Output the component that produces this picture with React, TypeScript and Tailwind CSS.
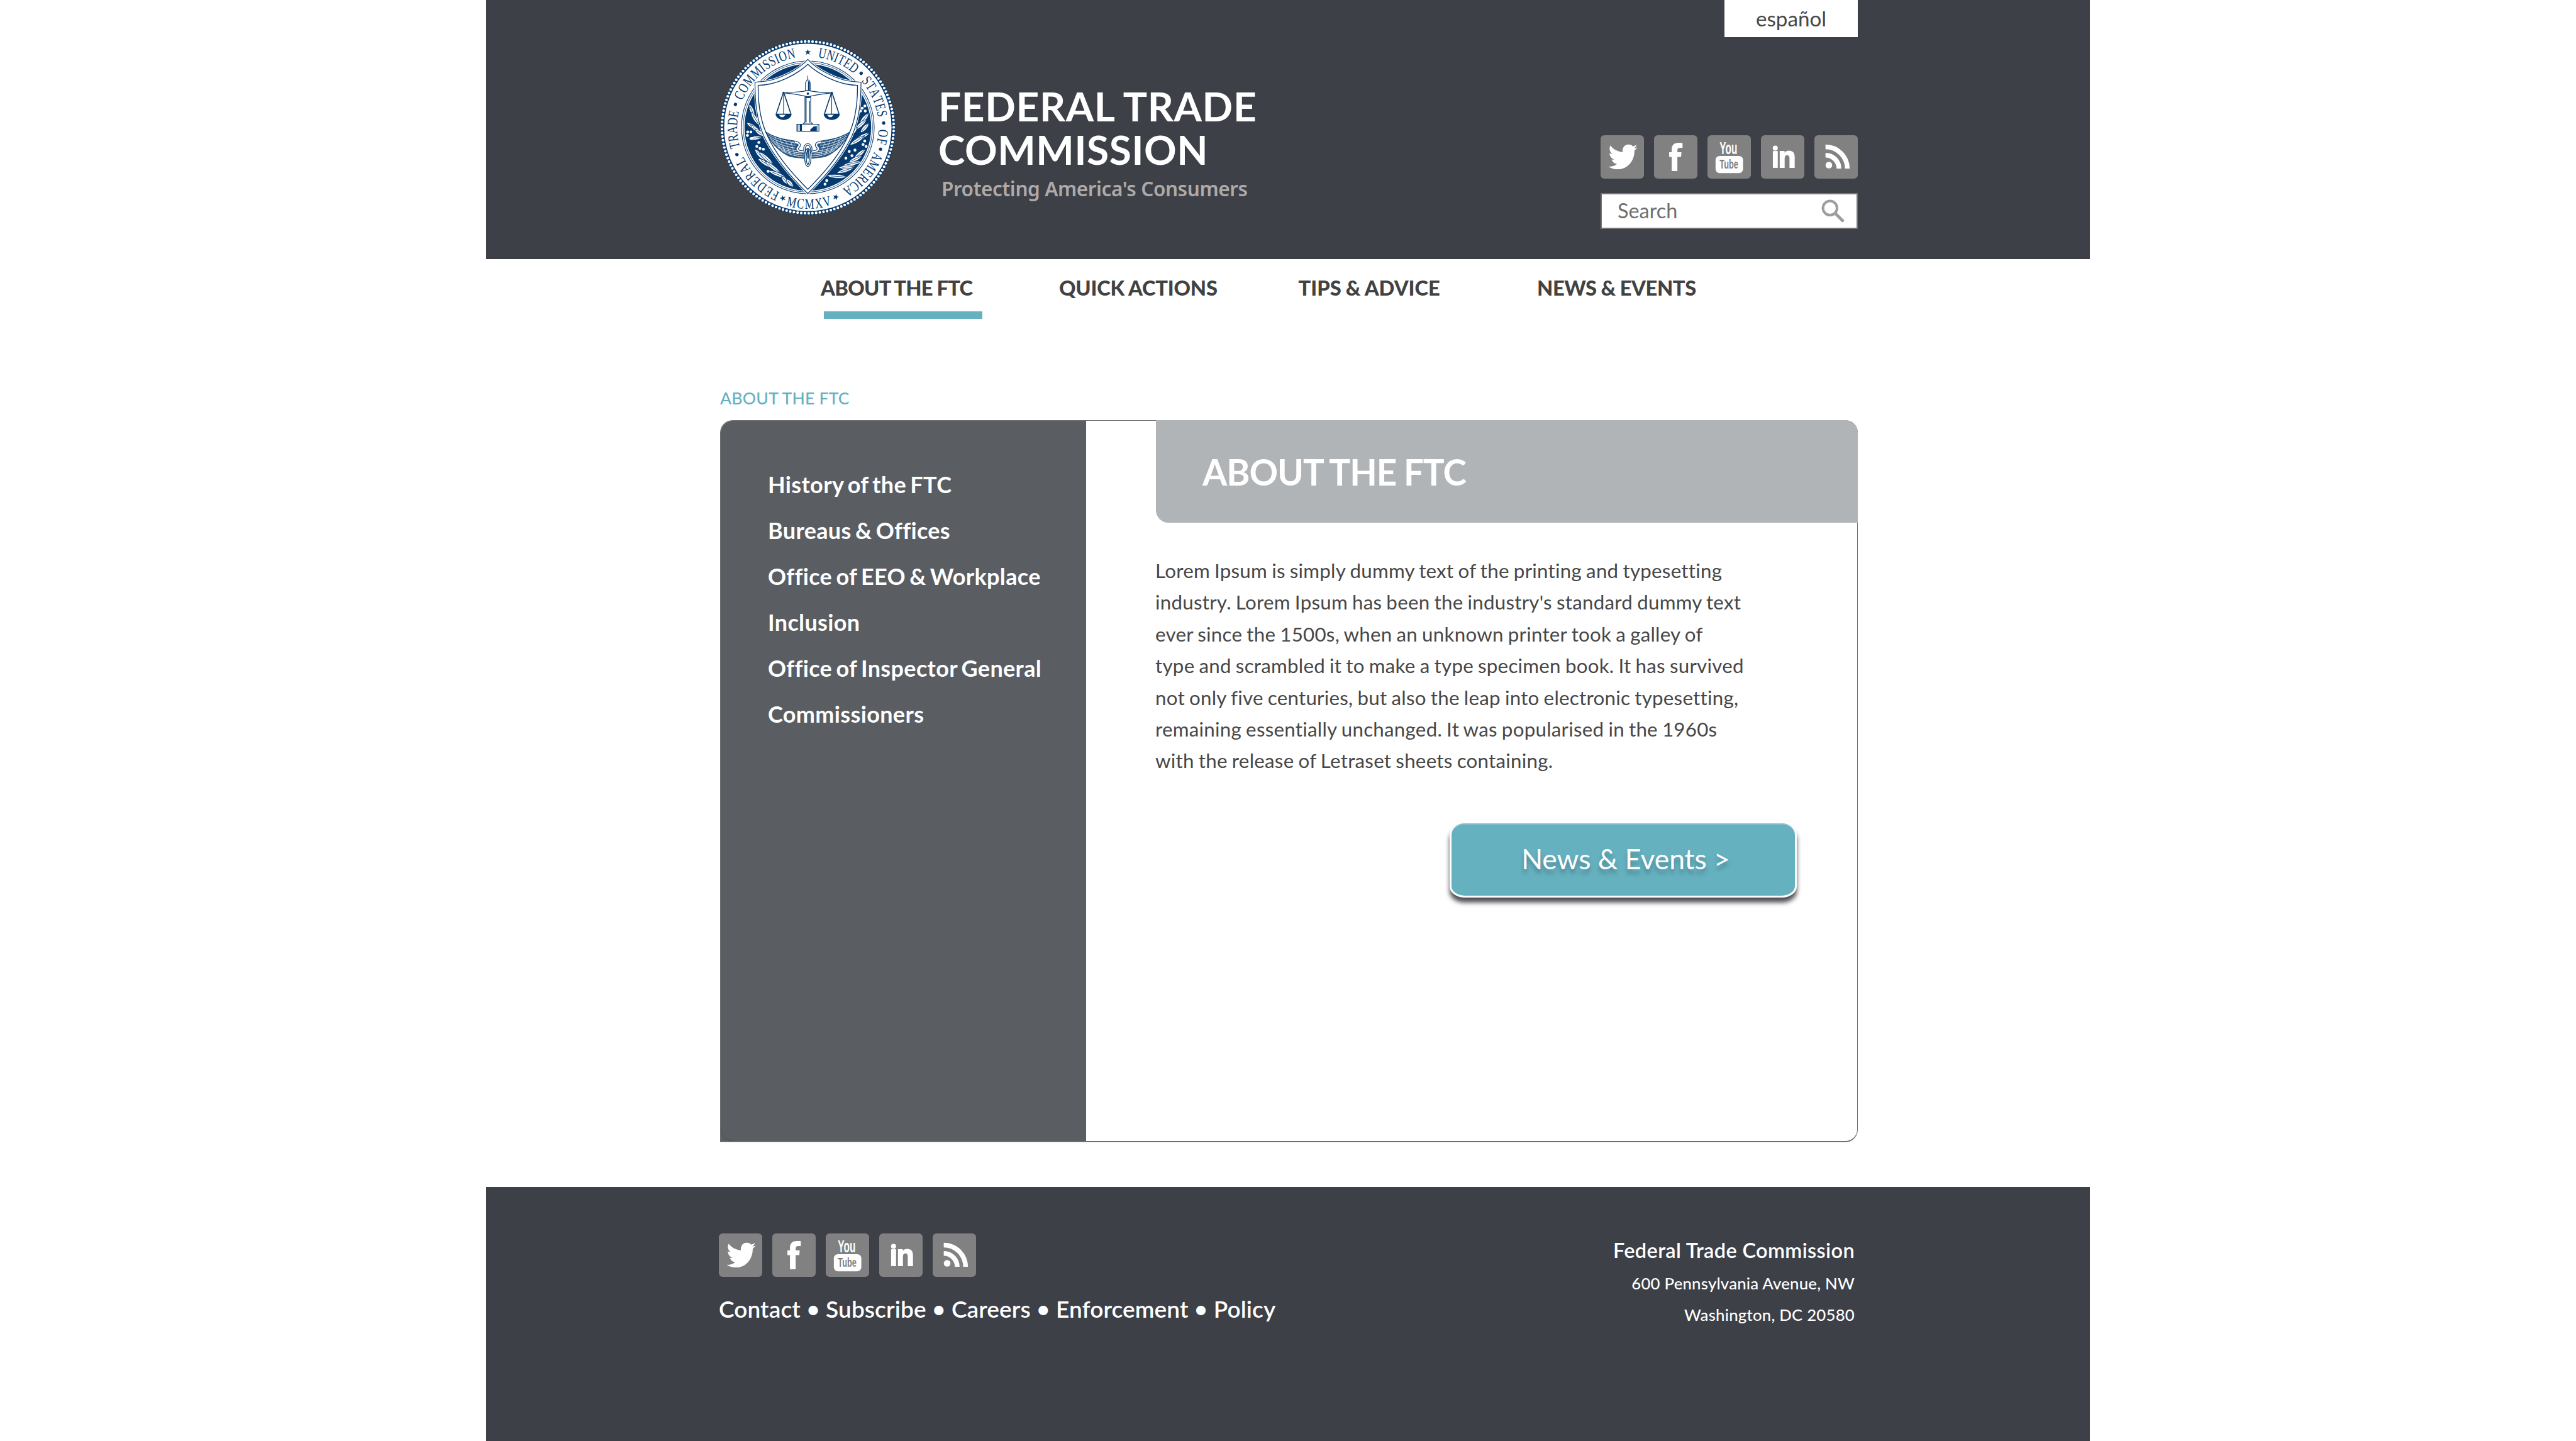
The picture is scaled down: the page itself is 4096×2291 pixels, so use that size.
import React from "react";
import { FaTwitter } from "react-icons/fa";

const BLUE = "#053a70";

const WIDTHS: Record<string, number> = {
  A: 722, C: 667, D: 722, E: 611, F: 556, I: 333, L: 611, M: 889, N: 722,
  O: 722, R: 667, S: 556, T: 611, U: 722, V: 722, X: 722,
};

type RingWord = { text: string; from: number; to: number; flip?: boolean };

const RING_WORDS: RingWord[] = [
  { text: "UNITED", from: 8, to: 41 },
  { text: "STATES", from: 49, to: 82 },
  { text: "OF", from: 91, to: 103.5 },
  { text: "AMERICA", from: 110, to: 151 },
  { text: "MCMXV", from: 196, to: 162.5, flip: true },
  { text: "FEDERAL", from: 203, to: 246 },
  { text: "TRADE", from: 253.5, to: 283 },
  { text: "COMMISSION", from: 292, to: 350.5 },
];

function RingText({ text, from, to, flip }: RingWord) {
  const total = [...text].reduce((s, c) => s + WIDTHS[c], 0);
  const span = to - from;
  let acc = 0;
  return (
    <>
      {[...text].map((c, i) => {
        const mid = from + (span * (acc + WIDTHS[c] / 2)) / total;
        acc += WIDTHS[c];
        const angle = flip ? mid - 180 : mid;
        return (
          <text
            key={i}
            textAnchor="middle"
            fontSize="86"
            fontFamily="Liberation Serif, serif"
            fill={BLUE}
            transform={`rotate(${angle}) translate(0 ${flip ? 483 : -420}) scale(0.74 1)`}
          >
            {c}
          </text>
        );
      })}
    </>
  );
}

const STAR = "M0 -19 L4.6 -6 L18 -6 L7.2 2.4 L11.2 15.4 L0 7.6 L-11.2 15.4 L-7.2 2.4 L-18 -6 L-4.6 -6Z";
const SHIELD = "M597 173 C650 235 780 300 870 305 L913 309 C912 420 905 520 858 630 C800 750 700 870 597 970 C494 870 394 750 336 630 C289 520 284 420 283 309 L324 305 C414 300 544 235 597 173Z";
const SHIELD_IN = "M597 203 C660 262 780 326 892 327 C893 440 880 540 835 630 C780 750 690 850 597 945 C504 850 414 750 359 630 C314 540 301 440 302 327 C414 326 534 262 597 203Z";

const LEAVES: [number, number, number, number][] = [
  [265, 478, 42, 68], [284, 525, 44, 58], [270, 572, 44, 32], [292, 592, 46, 40], [285, 640, 40, -8], [312, 610, 36, 34],
  [312, 740, 46, 48], [350, 760, 56, 42], [345, 790, 52, 32], [390, 815, 58, 38], [415, 855, 56, 22], [460, 890, 30, 52], [490, 908, 32, 48],
  [932, 525, 44, -50], [912, 560, 46, -42], [935, 580, 38, -48], [920, 632, 50, -28], [890, 655, 52, -32], [868, 600, 34, -48],
  [905, 735, 46, -40], [862, 792, 60, -12], [880, 765, 44, -26], [820, 832, 54, -18], [770, 868, 60, 4], [830, 812, 50, -6],
];

const BERRIES: [number, number][] = [
  [240, 604], [259, 604], [238, 625], [262, 643], [306, 667], [294, 690], [313, 702], [333, 707], [361, 838],
  [936, 450], [920, 463], [938, 480], [910, 480], [935, 658], [925, 679], [943, 690], [877, 712], [843, 720], [859, 745], [823, 760], [709, 893], [699, 914],
];

const WING = "M347 604 C400 640 470 652 520 662 C550 668 552 684 540 694 C528 706 536 722 560 722 L574 726 L574 764 C540 756 500 760 470 742 C420 715 375 670 347 604Z";

function Wing() {
  return (
    <g>
      <path d={WING} fill={BLUE} fillOpacity="0.86" />
      <g fill="none" stroke="#fff" strokeWidth="3.2">
        <path d="M358 614 C410 646 470 660 532 672" />
        <path d="M364 628 C415 662 470 676 524 684" />
        <path d="M372 642 C420 678 470 692 522 700" />
        <path d="M382 656 C430 694 480 710 530 716" />
        <path d="M398 674 C440 708 490 724 560 730" />
        <path d="M418 694 C460 722 510 738 572 740" />
        <path d="M440 714 C480 736 520 748 572 752" />
        <path d="M400 632 L430 700 M432 646 L462 724 M464 654 L492 736 M496 662 L520 746" strokeWidth="2.2" />
      </g>
      <path d="M520 664 C550 670 552 684 540 694 C528 706 536 722 572 722" fill="none" stroke="#fff" strokeWidth="9" />
      <path d="M347 604 C400 640 470 652 520 658 C556 664 558 684 546 696 C536 706 542 718 572 716" fill="none" stroke={BLUE} strokeWidth="4" />
    </g>
  );
}

function Pan({ x }: { x: number }) {
  return (
    <g stroke={BLUE} fill="none">
      <path d={`M${x} 366 L${x - 43} 496 M${x} 366 L${x + 43} 496`} strokeWidth="6" />
      <path d={`M${x} 366 V500`} strokeWidth="4" />
      <path d={`M${x - 48} 496 H${x + 48} C${x + 46} 522 ${x + 22} 533 ${x} 533 C${x - 22} 533 ${x - 46} 522 ${x - 48} 496Z`} fill={BLUE} stroke="none" />
      <path d={`M${x - 28} 502 H${x + 12} L${x - 2} 516 H${x - 16}Z`} fill="#fff" stroke="none" />
    </g>
  );
}

function Seal() {
  const dots = [44.6, 86.7, 106.7, 249, 287.6];
  const stars = [0, 158.2, 199.4];
  return (
    <svg className="block size-[279px] shrink-0" viewBox="76 56 1042 1042" role="img" aria-label="Federal Trade Commission seal">
      <defs>
        <clipPath id="disc"><circle cx="597" cy="577" r="374" /></clipPath>
      </defs>
      <circle cx="597" cy="577" r="519" fill={BLUE} />
      <circle cx="597" cy="577" r="510" fill="none" stroke="#fff" strokeWidth="16" strokeLinecap="round" strokeDasharray="0 1" pathLength="145" />
      <circle cx="597" cy="577" r="497" fill="#fff" />
      <circle cx="597" cy="577" r="394" fill="none" stroke={BLUE} strokeWidth="4" />
      <circle cx="597" cy="577" r="384" fill="none" stroke={BLUE} strokeWidth="3" />
      <circle cx="597" cy="577" r="376" fill={BLUE} />
      <g clipPath="url(#disc)">
        {LEAVES.map(([x, y, r, a], i) => (
          <g key={i} transform={`translate(${x} ${y}) rotate(${a})`}>
            <path d={`M${-r} 0 C${-r / 2} -15 ${r / 2} -15 ${r} 0 C${r / 2} 15 ${-r / 2} 15 ${-r} 0Z`} fill="#fff" stroke={BLUE} strokeWidth="3" />
            <path d={`M${-r * 0.6} 0 H${r}`} stroke={BLUE} strokeWidth="3" />
          </g>
        ))}
        {BERRIES.map(([x, y], i) => (
          <circle key={i} cx={x} cy={y} r="8.5" fill="#fff" />
        ))}
      </g>
      <path d={SHIELD} fill="#fff" stroke="#fff" strokeWidth="12" />
      <path d={SHIELD} fill="#fff" stroke={BLUE} strokeWidth="4.5" />
      <path d={SHIELD_IN} fill="#fff" stroke={BLUE} strokeWidth="5" />
      <g stroke={BLUE} fill="#fff" strokeWidth="4">
        <path d="M597 270 V300" />
        <path d="M590 300 L592 296 H602 L605 300 L611 312 V360 H583 V312Z" />
        <path d="M603 304 V358" strokeWidth="10" />
        <path d="M580 392 H614 V545 L626 557 H568 L580 545Z" />
        <path d="M586 396 V548" strokeWidth="6" />
        <path d="M583 398 H612" strokeWidth="10" />
        <path d="M608 420 V548" strokeWidth="4" />
        <path d="M446 372 C510 370 560 366 597 358 C634 366 684 370 748 372 C684 376 640 386 597 395 C554 386 510 376 446 372Z" />
        <circle cx="597" cy="377" r="5" fill={BLUE} />
        <path d="M532 558 H663 V600 H532Z" />
        <path d="M538 560 V600 M545 560 V600" strokeWidth="3" />
        <path d="M556 560 V600" strokeWidth="12" />
        <path d="M612 590 L632 572 L650 570 V600 H612Z" fill={BLUE} strokeWidth="1" />
        <path d="M656 560 V600" strokeWidth="3" />
      </g>
      <Pan x={453} />
      <Pan x={739} />
      <Wing />
      <g transform="translate(1194 0) scale(-1 1)"><Wing /></g>
      <g fill="none">
        <ellipse cx="597" cy="706" rx="20" ry="28" stroke={BLUE} strokeWidth="14" />
        <ellipse cx="597" cy="706" rx="20" ry="28" stroke="#fff" strokeWidth="5" />
        <ellipse cx="597" cy="756" rx="14" ry="48" fill="#fff" stroke={BLUE} strokeWidth="14" />
        <ellipse cx="597" cy="756" rx="14" ry="48" stroke="#fff" strokeWidth="5" />
        <path d="M598 700 V762" stroke={BLUE} strokeWidth="8" />
      </g>
      <g transform="translate(597 577)">
        {RING_WORDS.map((w) => <RingText key={w.text} {...w} />)}
        {dots.map((a) => (
          <circle key={a} r="10" fill={BLUE} transform={`rotate(${a}) translate(0 -451)`} />
        ))}
        {stars.map((a) => (
          <path key={a} d={STAR} fill={BLUE} transform={`rotate(${a}) translate(0 -446)`} />
        ))}
      </g>
    </svg>
  );
}

function Tile({ label, children }: { label: string; children: React.ReactNode }) {
  return (
    <a aria-label={label} className="block size-[69px] rounded-[6px] bg-[#818181]">
      <svg viewBox="0 0 86 86" className="block size-full" fill="#fff">{children}</svg>
    </a>
  );
}

function Social() {
  return (
    <div className="flex gap-4">
      <Tile label="Twitter">
        <FaTwitter x="15.5" y="18" className="h-[49.7px] w-[57.5px]" viewBox="0 48 512 416" preserveAspectRatio="none" color="#fff" />
      </Tile>
      <Tile label="Facebook">
        <path d="M56.5 15.4 V25 H52 C48 25 46.3 26.6 46.3 30 V33.7 H54.3 L53.6 43 H46.3 V71 H35 V43 H30 V33.7 H35 V28 C35 19.5 40 15 48.5 15 C51.5 15 54.5 15.2 56.5 15.4Z" />
      </Tile>
      <Tile label="YouTube">
        <text x="24" y="37.7" fontSize="34" fontWeight="700" fontFamily="Liberation Sans Narrow, Liberation Sans, sans-serif" textLength="35" lengthAdjust="spacingAndGlyphs">You</text>
        <rect x="16" y="41" width="54.5" height="34" rx="8" />
        <text x="24" y="65.5" fontSize="25" fontWeight="700" fill="#818181" fontFamily="Liberation Sans Narrow, Liberation Sans, sans-serif" textLength="37" lengthAdjust="spacingAndGlyphs">Tube</text>
      </Tile>
      <Tile label="LinkedIn">
        <circle cx="28.4" cy="25.5" r="5" />
        <rect x="23.6" y="31.3" width="9.8" height="33.4" />
        <path d="M37.2 31.3 H46.8 V34.6 C49 31.8 52 30.6 55.3 30.6 C63 30.6 66.9 35 66.9 43 V64.7 H56.6 V46 C56.6 41.6 55 39.6 52 39.6 C48.8 39.6 47 41.8 47 46 V64.7 H37.2Z" />
      </Tile>
      <Tile label="RSS">
        <circle cx="28.7" cy="59.2" r="6.6" />
        <path d="M22 39.5 A26.7 26.7 0 0 1 48.7 66.2 M22 23 A43.2 43.2 0 0 1 65.2 66.2" fill="none" stroke="#fff" strokeWidth="9.4" />
      </Tile>
    </div>
  );
}

const NAV = [
  { label: "ABOUT THE FTC", tracking: "tracking-[-0.7px]", active: true },
  { label: "QUICK ACTIONS", tracking: "tracking-[-0.2px]" },
  { label: "TIPS & ADVICE", tracking: "tracking-[0px]" },
  { label: "NEWS & EVENTS", tracking: "tracking-[-0.4px]" },
];
const SIDE = ["History of the FTC", "Bureaus & Offices", "Office of EEO & Workplace", "Inclusion", "Office of Inspector General", "Commissioners"];
const BODY = [
  "Lorem Ipsum is simply dummy text of the printing and typesetting",
  "industry. Lorem Ipsum has been the industry's standard dummy text",
  "ever since the 1500s, when an unknown printer took a galley of",
  "type and scrambled it to make a type specimen book. It has survived",
  "not only five centuries, but also the leap into electronic typesetting,",
  "remaining essentially unchanged. It was popularised in the 1960s",
  "with the release of Letraset sheets containing.",
];

export default function App() {
  return (
    <div className="h-[2291px] w-[4096px] overflow-hidden bg-white font-[Lato,sans-serif]">
      <div className="ml-[773px] flex h-full w-[2550px] flex-col">
        <header className="flex h-[412px] justify-between bg-[#3d4047] pr-[369px] pl-[372px]">
          <div className="flex pt-[63px]">
            <Seal />
            <div className="ml-[68px] pt-[71px] text-white">
              <h1 className="text-[64px] leading-[69px] font-bold tracking-[0.6px]">FEDERAL TRADE<br />COMMISSION</h1>
              <p className="mt-[4px] ml-[5px] font-['Noto_Sans'] text-[31.5px] leading-[48px] font-semibold tracking-[-0.4px] text-[#aeaaa9]">Protecting America's Consumers</p>
            </div>
          </div>
          <div className="flex w-[409px] flex-col items-end">
            <a className="flex h-[59px] w-[212px] items-center justify-center bg-white text-[33.2px] leading-[59px] text-[#474747]">español</a>
            <div className="mt-[156px]"><Social /></div>
            <div className="mt-[23px] flex h-[57px] w-full items-center justify-between border-2 border-[#757373] bg-white pr-[19px] pb-px pl-[25px] text-[32.4px] text-[#6e6e6e]">
              <span>Search</span>
              <svg className="mb-[3px] size-[40px]" viewBox="0 0 50 50" fill="none" stroke="#9d9d9d" strokeWidth="5">
                <circle cx="21" cy="21" r="14" />
                <path d="M32 32 L46 46" strokeWidth="6" strokeLinecap="round" />
              </svg>
            </div>
          </div>
        </header>

        <nav className="grid grid-cols-[379px_380.5px_379.5px_auto] pt-[27px] pl-[532px] text-[32.7px] leading-[38px] font-black text-[#424242] [word-spacing:-0.6px]">
          {NAV.map((n) => (
            <a key={n.label} className={`block ${n.tracking}`}>
              {n.label}
              {n.active && <span className="mt-[18px] ml-[5px] block h-[12px] w-[252px] bg-[#66b1bf]" />}
            </a>
          ))}
        </nav>

        <main className="ml-[372px] w-[1809px]">
          <p className="mt-[110px] text-[26.6px] leading-[32px] font-medium tracking-[0.2px] text-[#66b1bf]">ABOUT THE FTC</p>
          <section className="mt-[19px] flex h-[1148px] rounded-[20px] rounded-bl-none border border-b-2 border-[#6f6f6f]">
            <aside className="relative w-[581px] shrink-0 rounded-tl-[19px] bg-[#5a5d61] pt-[65px] pl-[75px] text-[36px] leading-[73px] font-bold tracking-[0.35px] text-white [word-spacing:-2.8px]">
              {SIDE.map((s) => <a key={s} className="block">{s}</a>)}
              <span className="absolute bottom-0 left-0 size-[20px] rounded-bl-[20px] border-b border-l border-[#4f5256]" />
            </aside>
            <div className="flex flex-1 flex-col pl-[111px]">
              <h2 className="-mt-px -mr-px h-[163px] rounded-tr-[20px] rounded-bl-[20px] bg-[#b0b4b7] pl-[74px] text-[56.5px] leading-[164px] font-bold tracking-[-1px] text-white [word-spacing:-1px]">ABOUT THE FTC</h2>
              <p className="mt-[51px] -ml-px text-[31.3px] leading-[50.4px] tracking-[0.25px] whitespace-nowrap text-[#474747] [word-spacing:-1.2px]">
                {BODY.map((l) => <React.Fragment key={l}>{l}<br /></React.Fragment>)}
              </p>
              <a className="mt-[74px] mr-[96px] flex h-[118px] w-[552px] items-center justify-center self-end rounded-[24px/18px] border-x-3 border-b-3 border-white bg-[#66b1bf] pb-[3px] pl-[8px] text-[44.4px] text-white shadow-[0_8px_7px_rgba(50,52,56,0.85),inset_0_2px_0_#84c1cd] text-shadow-[0_7px_6px_rgba(60,110,125,0.6)]">News &amp; Events &gt;</a>
            </div>
          </section>
        </main>

        <footer className="mt-[71px] flex flex-1 justify-between bg-[#3d4047] pt-[74px] pr-[374px] pl-[370px] text-white">
          <div>
            <Social />
            <p className="mt-[29px] text-[37px] leading-[44px] font-semibold tracking-[0.1px]">Contact • Subscribe • Careers • Enforcement • Policy</p>
          </div>
          <address className="pt-[2px] text-right text-[25.8px] leading-[50.5px] font-medium tracking-[0.2px] not-italic">
            <strong className="mb-px block text-[32.5px] font-semibold tracking-[0.35px]">Federal Trade Commission</strong>
            600 Pennsylvania Avenue, NW<br />Washington, DC 20580
          </address>
        </footer>
      </div>
    </div>
  );
}
